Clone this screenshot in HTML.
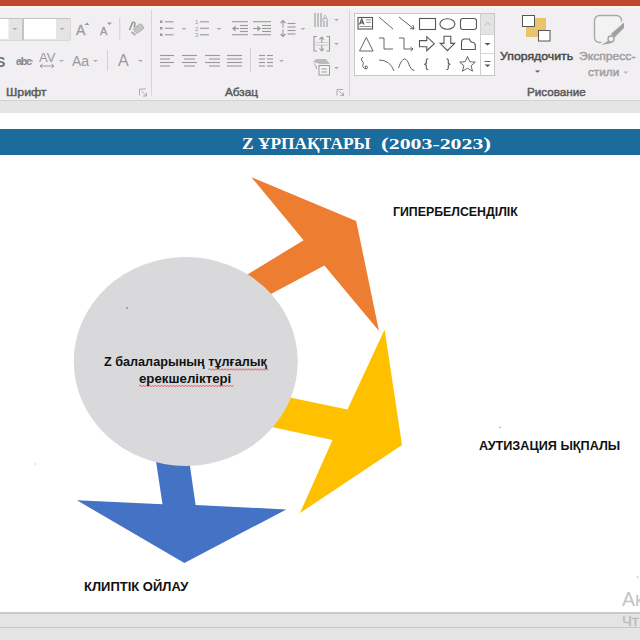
<!DOCTYPE html>
<html><head><meta charset="utf-8">
<style>
html,body{margin:0;padding:0;}
body{width:640px;height:640px;overflow:hidden;position:relative;background:#fff;font-family:"Liberation Sans",sans-serif;}
.abs{position:absolute;}
#topbar{left:0;top:0;width:640px;height:6px;background:#bf472c;}
#ribbon{left:0;top:6px;width:640px;height:94px;background:#f1eff1;}
#rline{left:0;top:100px;width:640px;height:1px;background:#d2d2d2;}
#rband{left:0;top:101px;width:640px;height:12px;background:#e5e5e5;}
#blue{left:0;top:129px;width:640px;height:26px;background:#1b6b9c;}
.lbl{position:absolute;font-size:11.3px;color:#5a5a5a;font-weight:normal;-webkit-text-stroke:0.45px currentColor;white-space:nowrap;transform-origin:0 0;}
.slbl{position:absolute;font-size:13px;transform-origin:0 0;color:#111;font-weight:bold;white-space:nowrap;}
#bline{left:0;top:612px;width:640px;height:2px;background:#c9c9c9;}
#bband{left:0;top:614px;width:640px;height:13px;background:#e4e4e4;}
#bline2{left:0;top:627px;width:640px;height:1px;background:#c6c6c6;}
#bbot{left:0;top:628px;width:640px;height:12px;background:#e5e5e5;}
</style></head><body>
<div id="topbar" class="abs"></div>
<div id="ribbon" class="abs"></div>
<div id="rline" class="abs"></div>
<div class="abs" style="left:0;top:6px;width:640px;height:2px;background:#f8f5f5;"></div>
<div id="rband" class="abs"></div>
<div id="blue" class="abs"></div>
<div id="bline" class="abs"></div>
<div id="bband" class="abs"></div>
<div id="bline2" class="abs"></div>
<div id="bbot" class="abs"></div>

<!-- ribbon svg -->
<svg class="abs" style="left:0;top:0" width="640" height="113" viewBox="0 0 640 113">
  <!-- font name box -->
  <rect x="-1" y="18.5" width="23.5" height="21.5" fill="#fff" stroke="#c4c4c4"/>
  <rect x="8.5" y="19" width="13.5" height="20.5" fill="#e4e4e4"/>
  <path d="M12.5 28 l2.5 2 l2.5 -2z" fill="#aaa"/>
  <rect x="23.5" y="18.5" width="46.5" height="21.5" fill="#fff" stroke="#c4c4c4"/>
  <rect x="56" y="19" width="13.5" height="20.5" fill="#e4e4e4"/>
  <path d="M59.5 28 l2.5 2 l2.5 -2z" fill="#aaa"/>
  <!-- grow/shrink font -->
  <text x="76" y="35" font-size="14" fill="#9a9a9a" stroke="#9a9a9a" stroke-width="0.3" font-family="Liberation Sans">A</text>
  <path d="M84.5 25 l2.5 -2.5 l2.5 2.5z" fill="#999"/>
  <text x="100" y="35" font-size="11" fill="#9a9a9a" stroke="#9a9a9a" stroke-width="0.3" font-family="Liberation Sans">A</text>
  <path d="M107 22.5 l2.5 2.5 l2.5 -2.5z" fill="#999"/>
  <line x1="119.75" y1="17.5" x2="119.75" y2="39.5" stroke="#d0d0d0"/>
  <!-- clear formatting -->
  <path d="M129.5 30 L132.5 22.5 Q134.5 21.5 135 24 L134 27" fill="none" stroke="#999" stroke-width="1.6"/>
  <rect x="134" y="25.5" width="9.5" height="6" rx="1.5" transform="rotate(-35 138.75 28.5)" fill="#c4c4c4" stroke="#aaa" stroke-width="0.8"/>
  <line x1="131.5" y1="32" x2="135.5" y2="35" stroke="#aaa" stroke-width="2"/>
  <!-- row 2 -->
  <text x="-4" y="66.5" font-size="14" fill="#707070" font-family="Liberation Sans" font-weight="bold">S</text>
  <text x="16" y="65" font-size="11" fill="#8a8a8a" font-family="Liberation Sans" font-weight="bold" textLength="16">abc</text>
  <line x1="16" y1="61" x2="33" y2="61" stroke="#999" stroke-width="1"/>
  <text x="39" y="62" font-size="13" fill="#999" font-family="Liberation Sans">AV</text>
  <path d="M40 66 h14 M40 66 l2.5 -2 M40 66 l2.5 2 M54 66 l-2.5 -2 M54 66 l-2.5 2" stroke="#999" stroke-width="1"/>
  <path d="M59 60 l2.5 2 l2.5 -2z" fill="#aaa"/>
  <text x="72" y="66" font-size="14" fill="#999" font-family="Liberation Sans">Aa</text>
  <path d="M93 60 l2.5 2 l2.5 -2z" fill="#aaa"/>
  <line x1="107.5" y1="50" x2="107.5" y2="71" stroke="#d0d0d0"/>
  <text x="118" y="66" font-size="16" fill="#999" font-family="Liberation Sans">A</text>
  <path d="M138 60 l2.5 2 l2.5 -2z" fill="#aaa"/>
  <!-- group label font -->
  <line x1="151.5" y1="10" x2="151.5" y2="96" stroke="#d6d6d6"/>
  <path d="M139.5 95.5 v-6.5 h6.5 M141.5 91 l5 5 M146.5 92.5 v3.5 h-3.5" stroke="#a5a5a5" fill="none" stroke-width="0.9"/>

  <!-- paragraph group -->
  <g fill="#999" stroke="none">
    <rect x="160" y="20.5" width="2.5" height="2.5"/><rect x="160" y="27" width="2.5" height="2.5"/><rect x="160" y="33.5" width="2.5" height="2.5"/>
  </g>
  <g stroke="#999" stroke-width="1.1">
    <line x1="165" y1="21.8" x2="173.5" y2="21.8"/><line x1="165" y1="28.3" x2="173.5" y2="28.3"/><line x1="165" y1="34.8" x2="173.5" y2="34.8"/>
  </g>
  <path d="M181.5 28 l2.5 2 l2.5 -2z" fill="#aaa"/>
  <g font-size="6" fill="#999" font-family="Liberation Sans"><text x="195" y="24">1</text><text x="195" y="30.5">2</text><text x="195" y="37">3</text></g>
  <g stroke="#999" stroke-width="1.1">
    <line x1="200" y1="21.8" x2="209" y2="21.8"/><line x1="200" y1="28.3" x2="209" y2="28.3"/><line x1="200" y1="34.8" x2="209" y2="34.8"/>
  </g>
  <path d="M216.5 28 l2.5 2 l2.5 -2z" fill="#aaa"/>
  <!-- decrease indent -->
  <g stroke="#999" stroke-width="1.1">
    <line x1="232" y1="21.7" x2="248" y2="21.7"/><line x1="240" y1="25.5" x2="248" y2="25.5"/><line x1="240" y1="28.5" x2="248" y2="28.5"/><line x1="240" y1="31.5" x2="248" y2="31.5"/><line x1="232" y1="34.7" x2="248" y2="34.7"/>
    <line x1="233" y1="28.5" x2="239" y2="28.5"/>
  </g>
  <path d="M232 28.5 l3.5 -3 v6z" fill="#999"/>
  <!-- increase indent -->
  <g stroke="#999" stroke-width="1.1">
    <line x1="253" y1="21.7" x2="271" y2="21.7"/><line x1="262" y1="25.5" x2="271" y2="25.5"/><line x1="262" y1="28.5" x2="271" y2="28.5"/><line x1="262" y1="31.5" x2="271" y2="31.5"/><line x1="253" y1="34.7" x2="271" y2="34.7"/>
    <line x1="253" y1="28.5" x2="258" y2="28.5"/>
  </g>
  <path d="M261 28.5 l-3.5 -3 v6z" fill="#999"/>
  <!-- line spacing -->
  <g stroke="#999" stroke-width="1.1" fill="none">
    <path d="M283 20.5 v7 M280.5 23 l2.5 -2.5 l2.5 2.5 M283 29.5 v7 M280.5 34 l2.5 2.5 l2.5 -2.5"/>
    <line x1="287.5" y1="23.5" x2="295.5" y2="23.5"/><line x1="287.5" y1="27" x2="295.5" y2="27"/><line x1="287.5" y1="30.5" x2="295.5" y2="30.5"/><line x1="287.5" y1="34" x2="295.5" y2="34"/>
  </g>
  <path d="M300.5 28 l2.5 2 l2.5 -2z" fill="#aaa"/>
  <!-- text direction -->
  <g stroke="#999" stroke-width="1.1" fill="none">
    <line x1="315" y1="13" x2="315" y2="27"/><line x1="318" y1="13" x2="318" y2="27"/><line x1="321" y1="13" x2="321" y2="27"/>
    <path d="M324 27 v-6 M327 27 v-6"/>
  </g>
  <text x="322" y="21" font-size="9" fill="#999" font-family="Liberation Sans">A</text>
  <path d="M334 19 l2.5 2 l2.5 -2z" fill="#aaa"/>
  <!-- align text -->
  <g stroke="#999" stroke-width="1.1" fill="none">
    <path d="M317 36.5 h-3 v14.5 h3 M326.5 36.5 h3 v14.5 h-3"/>
    <path d="M321.8 37 v6 M319.5 39.5 l2.3 -2.5 l2.3 2.5 M321.8 45 v6 M319.5 48.5 l2.3 2.5 l2.3 -2.5"/>
    <path d="M315.5 42.5 h12.5 M315.5 45 h12.5" stroke="#bbb" stroke-width="0.6"/>
  </g>
  <path d="M334 43 l2.5 2 l2.5 -2z" fill="#aaa"/>
  <!-- smartart -->
  <path d="M313 62 l3 -3 h10 l4 5 h-10z" fill="#bbb"/>
  <path d="M313 62 l4 5 v3z" fill="#aaa"/>
  <rect x="319" y="65.5" width="10.5" height="9.5" fill="#f6f6f6" stroke="#999"/>
  <line x1="321.5" y1="69" x2="327" y2="69" stroke="#999"/><line x1="321.5" y1="72" x2="327" y2="72" stroke="#999"/>
  <path d="M334 67 l2.5 2 l2.5 -2z" fill="#aaa"/>
  <!-- align row -->
  <g stroke="#999" stroke-width="1.1">
    <line x1="160" y1="55.5" x2="174" y2="55.5"/><line x1="160" y1="59" x2="170" y2="59"/><line x1="160" y1="62.5" x2="174" y2="62.5"/><line x1="160" y1="66" x2="170" y2="66"/>
    <line x1="182" y1="55.5" x2="197" y2="55.5"/><line x1="184" y1="59" x2="195" y2="59"/><line x1="182" y1="62.5" x2="197" y2="62.5"/><line x1="184" y1="66" x2="195" y2="66"/>
    <line x1="205" y1="55.5" x2="220" y2="55.5"/><line x1="209" y1="59" x2="220" y2="59"/><line x1="205" y1="62.5" x2="220" y2="62.5"/><line x1="209" y1="66" x2="220" y2="66"/>
    <line x1="227" y1="55.5" x2="242" y2="55.5"/><line x1="227" y1="59" x2="242" y2="59"/><line x1="227" y1="62.5" x2="242" y2="62.5"/><line x1="227" y1="66" x2="242" y2="66"/>
  </g>
  <line x1="250.5" y1="48" x2="250.5" y2="72" stroke="#d0d0d0"/>
  <g stroke="#999" stroke-width="1.1">
    <line x1="259" y1="55.5" x2="265" y2="55.5"/><line x1="259" y1="59" x2="265" y2="59"/><line x1="259" y1="62.5" x2="265" y2="62.5"/><line x1="259" y1="66" x2="265" y2="66"/>
    <line x1="267" y1="55.5" x2="273" y2="55.5"/><line x1="267" y1="59" x2="273" y2="59"/><line x1="267" y1="62.5" x2="273" y2="62.5"/><line x1="267" y1="66" x2="273" y2="66"/>
  </g>
  <path d="M279 60 l2.5 2 l2.5 -2z" fill="#aaa"/>
  <path d="M337 95.5 v-6 h6 M339 91 l4.5 4.5 M343.5 92.5 v3 h-3" stroke="#a5a5a5" fill="none" stroke-width="0.9"/>
  <line x1="349.5" y1="10" x2="349.5" y2="96" stroke="#d6d6d6"/>

  <!-- shapes gallery -->
  <rect x="354.5" y="13.5" width="140" height="62" fill="#fff" stroke="#c6c6c6"/>
  <rect x="481" y="14" width="13" height="20.5" fill="#e3e3e3"/>
  <line x1="480.5" y1="13.5" x2="480.5" y2="75.5" stroke="#cfcfcf"/>
  <line x1="481" y1="34.5" x2="494" y2="34.5" stroke="#d6d6d6"/>
  <line x1="481" y1="53.5" x2="494" y2="53.5" stroke="#d6d6d6"/>
  <path d="M485 25 l2.5 -2.5 l2.5 2.5" fill="none" stroke="#bbb"/>
  <path d="M484.5 43 l3 2.5 l3 -2.5z" fill="#555"/>
  <path d="M484.5 61.5 h6" stroke="#666" stroke-width="1"/>
  <path d="M484.5 64.5 l3 2.5 l3 -2.5z" fill="#555"/>
  <g fill="none" stroke="#555" stroke-width="0.9">
    <!-- row1 -->
    <rect x="358" y="17.5" width="14.5" height="11.5" stroke-width="1.1"/>
    <path d="M359.5 24.5 l2.2 -5.5 l2.2 5.5 M360.3 22.8 h2.8" stroke-width="1.2"/>
    <path d="M366 19.8 h5 M366 22.3 h5 M359.5 26.5 h12" stroke="#888"/>
    <line x1="379" y1="17" x2="393" y2="29"/>
    <path d="M399 17 l15 12 M414 29 l-1 -4 M414 29 l-4 -0.5"/>
    <rect x="419.5" y="18.5" width="16" height="11" stroke-width="1.1"/>
    <ellipse cx="447.4" cy="24" rx="7.5" ry="5.3" stroke-width="1.1"/>
    <rect x="460.5" y="18.5" width="16" height="11" rx="2.5" stroke-width="1.1"/>
    <!-- row2 -->
    <path d="M359.5 51 l6.8 -13.5 l6.8 13.5z"/>
    <path d="M379 38 h5 v11 h9"/>
    <path d="M399 38 h5 v11 h9 M413 49 l-2.5 -2 M413 49 l-2.5 2"/>
    <path d="M419.5 40.6 h7.3 v-3.9 l7.5 7 l-7.5 7 v-3.9 h-7.3z" stroke-width="1.1"/>
    <path d="M444 36.3 h6.8 v7.1 h3.8 l-7.2 7.3 l-7.2 -7.3 h3.8z" stroke-width="1.1"/>
    <path d="M461.5 49.5 v-7 q0 -3.5 3.5 -3.5 h4.5 q0.5 3 3 3.3 q2.8 0.4 2.8 3.2 v4 z" stroke-width="1.1"/>
    <!-- row3 -->
    <path d="M363 57 q-3 1.5 -1 4 q2.5 2 1 3.5 q-1.5 2 1.5 4 q2.5 1.5 3 -1 q0 -2 -2 -1.5 q-1 0.5 0.5 3"/>
    <path d="M379 60 q11 0 15 11"/>
    <path d="M398.5 68 q3 -9 6 -9 q3 0 5 7 q1.5 4 5 4.5"/>
    <path d="M428.3 58.8 q-2 0 -2 1.8 v2.6 l-1.6 1.1 l1.6 1.1 v2.6 q0 1.8 2 1.8" stroke-width="1.1"/>
    <path d="M446.3 58.8 q2 0 2 1.8 v2.6 l1.6 1.1 l-1.6 1.1 v2.6 q0 1.8 -2 1.8" stroke-width="1.1"/>
    <path d="M467.5 56.5 l2.3 5.2 l5.5 0.4 l-4.2 3.6 l1.4 5.5 l-5 -3 l-5 3 l1.4 -5.5 l-4.2 -3.6 l5.5 -0.4z"/>
  </g>

  <!-- arrange -->
  <rect x="526" y="18" width="20" height="19" fill="#e8c46a"/>
  <rect x="522.5" y="15.5" width="12" height="11" fill="#fff" stroke="#555"/>
  <rect x="538.5" y="30.5" width="11.5" height="10.5" fill="#fff" stroke="#555"/>
  <path d="M535 70.5 l2.5 2.2 l2.5 -2.2z" fill="#555"/>
  <!-- quick styles -->
  <rect x="594.5" y="15.5" width="27" height="27" rx="5" fill="#f4f3f3" stroke="#a9a9a9" stroke-width="1.4"/>
  <path d="M627 21 L627 47 L600 47 L626 21z" fill="#f1f0f0"/><path d="M626 20 L604 44 L598 46 L622 21z" fill="#f1f0f0"/>
  <path d="M624 22.5 L624 28 L614.5 37.5 L611 34z" fill="#a0a0a0"/>
  <circle cx="611" cy="39" r="3" fill="#f4f3f3" stroke="#a0a0a0" stroke-width="1.3"/>
  <path d="M608.5 40.5 L612 43 L601.5 45z" fill="#a0a0a0"/>
  <path d="M623.5 71.5 l2.3 2.3 l2.3 -2.3z" fill="#b5b5b5"/>
</svg>

<div class="lbl" id="l1" style="left:6px;top:85.5px;transform:scaleX(1.09);">Шрифт</div>
<div class="lbl" id="l2" style="left:225px;top:85.5px;transform:scaleX(1.04);">Абзац</div>
<div class="lbl" id="l3" style="left:527px;top:85.5px;transform:scaleX(1.033);">Рисование</div>
<div class="lbl" id="l4" style="left:500px;top:50px;transform:scaleX(1.087);color:#4a4a4a;">Упорядочить</div>
<div class="lbl" id="l5" style="left:578.5px;top:50px;transform:scaleX(1.073);color:#a0a0a0;">Экспресс-</div>
<div class="lbl" id="l6" style="left:588px;top:66px;transform:scaleX(1.04);color:#a0a0a0;">стили</div>
<!-- slide -->
<div id="t1" class="abs" style="left:242px;top:135px;color:#fff;font-family:'Liberation Serif',serif;font-weight:bold;font-size:16px;white-space:pre;transform-origin:0 0;transform:scaleX(1.085);">Z ҰРПАҚТАРЫ</div>
<div id="t2" class="abs" style="left:381px;top:135px;color:#fff;font-family:'Liberation Serif',serif;font-weight:bold;font-size:16px;white-space:pre;transform-origin:0 0;transform:scaleX(1.455);">(<span style="font-size:15px;letter-spacing:0px">2003-2023</span>)</div>

<svg class="abs" style="left:0;top:113px" width="640" height="499" viewBox="0 113 640 499">
  <polygon points="251.4,177.2 356.2,220.9 379,331 324.4,265.4 230,315.8 230,285.2 303.6,240.2" fill="#ed7d31"/>
  <polygon points="384.6,329.5 402,445 300,513 332.5,440 250,422.3 250,389.2 347.5,409.4" fill="#ffc000"/>
  <polygon points="152.8,440 186.2,440 195.6,505 286.3,509.4 184.4,563 76.9,500.3 162.5,504.2" fill="#4472c4"/>
  <ellipse cx="185.75" cy="361.5" rx="112" ry="104.5" fill="#d9d9dc"/>
  <circle cx="127" cy="308" r="0.9" fill="#8a8a8a"/>
  <circle cx="500" cy="427.5" r="0.8" fill="#999"/>
  <circle cx="35" cy="464" r="0.8" fill="#f0d060"/>
  <circle cx="637.5" cy="577" r="0.7" fill="#aaa"/>
</svg>
<div class="slbl" style="left:104px;top:354px;transform:scaleX(0.972);">Z балаларының тұлғалық</div>
<div class="slbl" style="left:139px;top:371px;transform:scaleX(1.02);">ерекшеліктері</div>
<svg class="abs" style="left:0;top:0" width="640" height="640">
<path id="w1" fill="none" stroke="#e04040" stroke-width="0.8" d="M208.5 369.5 L210.0 368.7 L211.5 370.3 L213.0 368.7 L214.5 370.3 L216.0 368.7 L217.5 370.3 L219.0 368.7 L220.5 370.3 L222.0 368.7 L223.5 370.3 L225.0 368.7 L226.5 370.3 L228.0 368.7 L229.5 370.3 L231.0 368.7 L232.5 370.3 L234.0 368.7 L235.5 370.3 L237.0 368.7 L238.5 370.3 L240.0 368.7 L241.5 370.3 L243.0 368.7 L244.5 370.3 L246.0 368.7 L247.5 370.3 L249.0 368.7 L250.5 370.3 L252.0 368.7 L253.5 370.3 L255.0 368.7 L256.5 370.3 L258.0 368.7 L259.5 370.3 L261.0 368.7 L262.5 370.3 L264.0 368.7 L265.5 370.3 L267.0 368.7 L268.5 370.3"/>
<path id="w2" fill="none" stroke="#e04040" stroke-width="0.8" d="M139.0 386.0 L140.5 385.2 L142.0 386.8 L143.5 385.2 L145.0 386.8 L146.5 385.2 L148.0 386.8 L149.5 385.2 L151.0 386.8 L152.5 385.2 L154.0 386.8 L155.5 385.2 L157.0 386.8 L158.5 385.2 L160.0 386.8 L161.5 385.2 L163.0 386.8 L164.5 385.2 L166.0 386.8 L167.5 385.2 L169.0 386.8 L170.5 385.2 L172.0 386.8 L173.5 385.2 L175.0 386.8 L176.5 385.2 L178.0 386.8 L179.5 385.2 L181.0 386.8 L182.5 385.2 L184.0 386.8 L185.5 385.2 L187.0 386.8 L188.5 385.2 L190.0 386.8 L191.5 385.2 L193.0 386.8 L194.5 385.2 L196.0 386.8 L197.5 385.2 L199.0 386.8 L200.5 385.2 L202.0 386.8 L203.5 385.2 L205.0 386.8 L206.5 385.2 L208.0 386.8 L209.5 385.2 L211.0 386.8 L212.5 385.2 L214.0 386.8 L215.5 385.2 L217.0 386.8 L218.5 385.2 L220.0 386.8 L221.5 385.2 L223.0 386.8 L224.5 385.2 L226.0 386.8 L227.5 385.2 L229.0 386.8 L230.5 385.2 L232.0 386.8 L233.5 385.2"/>
</svg>
<div class="slbl" style="left:393px;top:204px;transform:scaleX(0.949);">ГИПЕРБЕЛСЕНДІЛІК</div>
<div class="slbl" style="left:479px;top:438px;transform:scaleX(0.974);">АУТИЗАЦИЯ ЫҚПАЛЫ</div>
<div class="slbl" style="left:84px;top:579px;">КЛИПТІК ОЙЛАУ</div>
<div class="abs" style="left:622px;top:588px;font-size:19.5px;color:#c4c4c4;">Ак</div>
<div class="abs" style="left:622px;top:612px;font-size:15px;color:#bcbcbc;-webkit-text-stroke:0.3px #bcbcbc;">Чт</div>
</body></html>
